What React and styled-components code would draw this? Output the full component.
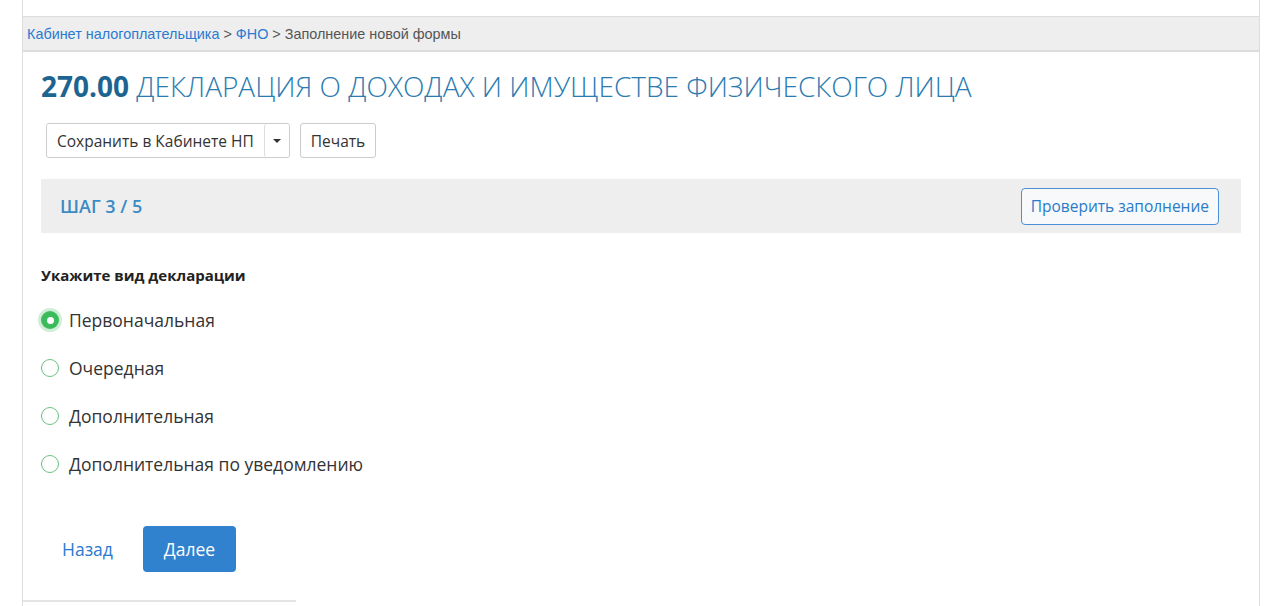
import React, { useState } from "react";
import styled, { createGlobalStyle } from "styled-components";

const GlobalStyle = createGlobalStyle`
  html, body {
    margin: 0;
    padding: 0;
    background: #fff;
    font-family: "Open Sans", "Noto Sans", sans-serif;
    color: #333;
  }
  * { box-sizing: border-box; }
`;

const Page = styled.div`
  width: 1238px;
  height: 606px;
  margin-left: 22px;
  border-left: 1px solid #ddd;
  border-right: 1px solid #ddd;
  padding-top: 16px;
  overflow: hidden;
`;

const Crumbs = styled.div`
  height: 36px;
  background: #eee;
  border-top: 1px solid #ddd;
  border-bottom: 2px solid #ddd;
  padding: 0 4px;
  display: flex;
  align-items: center;
  font-family: "Liberation Sans", Arial, sans-serif;
  font-size: 14.4px;
  color: #555;
  a {
    color: #2a7ad1;
    text-decoration: none;
  }
`;

const Content = styled.div`
  padding: 0 18px;
`;

const Title = styled.h1`
  margin: 15px 0 0;
  font-size: 28px;
  font-weight: 300;
  color: #2b7bb0;
  line-height: 38px;
  b {
    font-weight: 700;
    color: #1d6491;
  }
`;

const Toolbar = styled.div`
  display: flex;
  gap: 10px;
  margin: 18px 0 0 5px;
`;

const Group = styled.div`
  display: flex;
  border: 1px solid #ccc;
  border-radius: 3px;
  background: #fff;
`;

const ToolButton = styled.button`
  height: ${(p) => (p.$single ? "35px" : "33px")};
  padding: 0 ${(p) => (p.$split ? "8px" : "10px")};
  border: ${(p) => (p.$single ? "1px solid #ccc" : "none")};
  border-left: ${(p) => (p.$split ? "1px solid #ddd" : undefined)};
  border-radius: 3px;
  background: #fff;
  font-family: "Open Sans", sans-serif;
  font-size: 15.5px;
  color: #333;
  display: flex;
  align-items: center;
`;

const Caret = styled.span`
  width: 0;
  height: 0;
  border-left: 4px solid transparent;
  border-right: 4px solid transparent;
  border-top: 4px solid #333;
`;

const StepBar = styled.div`
  margin-top: 21px;
  height: 54px;
  background: #eee;
  display: flex;
  align-items: center;
  justify-content: space-between;
  padding: 0 22px 0 19px;
`;

const StepLabel = styled.div`
  font-size: 18px;
  font-weight: 600;
  color: #3b8bc4;
`;

const OutlineButton = styled.button`
  height: 37px;
  padding: 0 9px;
  border: 1px solid #4a90d9;
  border-radius: 4px;
  background: #f7f9fb;
  color: #2a7bc8;
  font-family: "Open Sans", sans-serif;
  font-size: 15.5px;
`;

const Question = styled.div`
  margin-top: 32px;
  font-size: 15px;
  font-weight: 700;
  color: #222;
`;

const Options = styled.div`
  display: flex;
  flex-direction: column;
  gap: 24px;
  margin-top: 23px;
`;

const Option = styled.label`
  display: flex;
  align-items: center;
  gap: 10px;
  height: 24px;
  font-size: 17.5px;
  color: #333;
  cursor: pointer;
`;

const Radio = styled.span`
  width: 18px;
  height: 18px;
  border-radius: 50%;
  flex-shrink: 0;
  border: ${(p) => (p.$on ? "none" : "1.5px solid #6cc084")};
  background: ${(p) => (p.$on ? "#3cbb5c" : "#fff")};
  box-shadow: ${(p) => (p.$on ? "0 0 0 3px rgba(60,187,92,0.25)" : "none")};
  display: flex;
  align-items: center;
  justify-content: center;
  &::after {
    content: "";
    display: ${(p) => (p.$on ? "block" : "none")};
    width: 7px;
    height: 7px;
    border-radius: 50%;
    background: #fff;
  }
`;

const Actions = styled.div`
  display: flex;
  align-items: center;
  gap: 30px;
  margin-top: 50px;
  padding-left: 21px;
`;

const LinkButton = styled.a`
  font-size: 17.5px;
  color: #2a7ad1;
  text-decoration: none;
`;

const PrimaryButton = styled.button`
  width: 93px;
  height: 46px;
  border: none;
  border-radius: 4px;
  background: #3182ce;
  color: #fff;
  font-family: "Open Sans", sans-serif;
  font-size: 17.5px;
`;

const Footer = styled.div`
  margin: 28px 0 0 -18px;
  width: 273px;
  border-top: 2px solid #e4e4e4;
`;

const options = [
  "Первоначальная",
  "Очередная",
  "Дополнительная",
  "Дополнительная по уведомлению",
];

export default function App() {
  const [value, setValue] = useState(0);
  return (
    <>
      <GlobalStyle />
      <Page>
        <Crumbs>
          <a href="#">Кабинет налогоплательщика</a>&nbsp;&gt;&nbsp;<a href="#">ФНО</a>&nbsp;&gt; Заполнение новой формы
        </Crumbs>
        <Content>
          <Title>
            <b>270.00</b> ДЕКЛАРАЦИЯ О ДОХОДАХ И ИМУЩЕСТВЕ ФИЗИЧЕСКОГО ЛИЦА
          </Title>
          <Toolbar>
            <Group>
              <ToolButton>Сохранить в Кабинете НП</ToolButton>
              <ToolButton $split>
                <Caret />
              </ToolButton>
            </Group>
            <ToolButton $single>Печать</ToolButton>
          </Toolbar>
          <StepBar>
            <StepLabel>ШАГ 3 / 5</StepLabel>
            <OutlineButton>Проверить заполнение</OutlineButton>
          </StepBar>
          <Question>Укажите вид декларации</Question>
          <Options>
            {options.map((o, i) => (
              <Option key={o} onClick={() => setValue(i)}>
                <Radio $on={value === i} />
                {o}
              </Option>
            ))}
          </Options>
          <Actions>
            <LinkButton href="#">Назад</LinkButton>
            <PrimaryButton>Далее</PrimaryButton>
          </Actions>
          <Footer />
        </Content>
      </Page>
    </>
  );
}
